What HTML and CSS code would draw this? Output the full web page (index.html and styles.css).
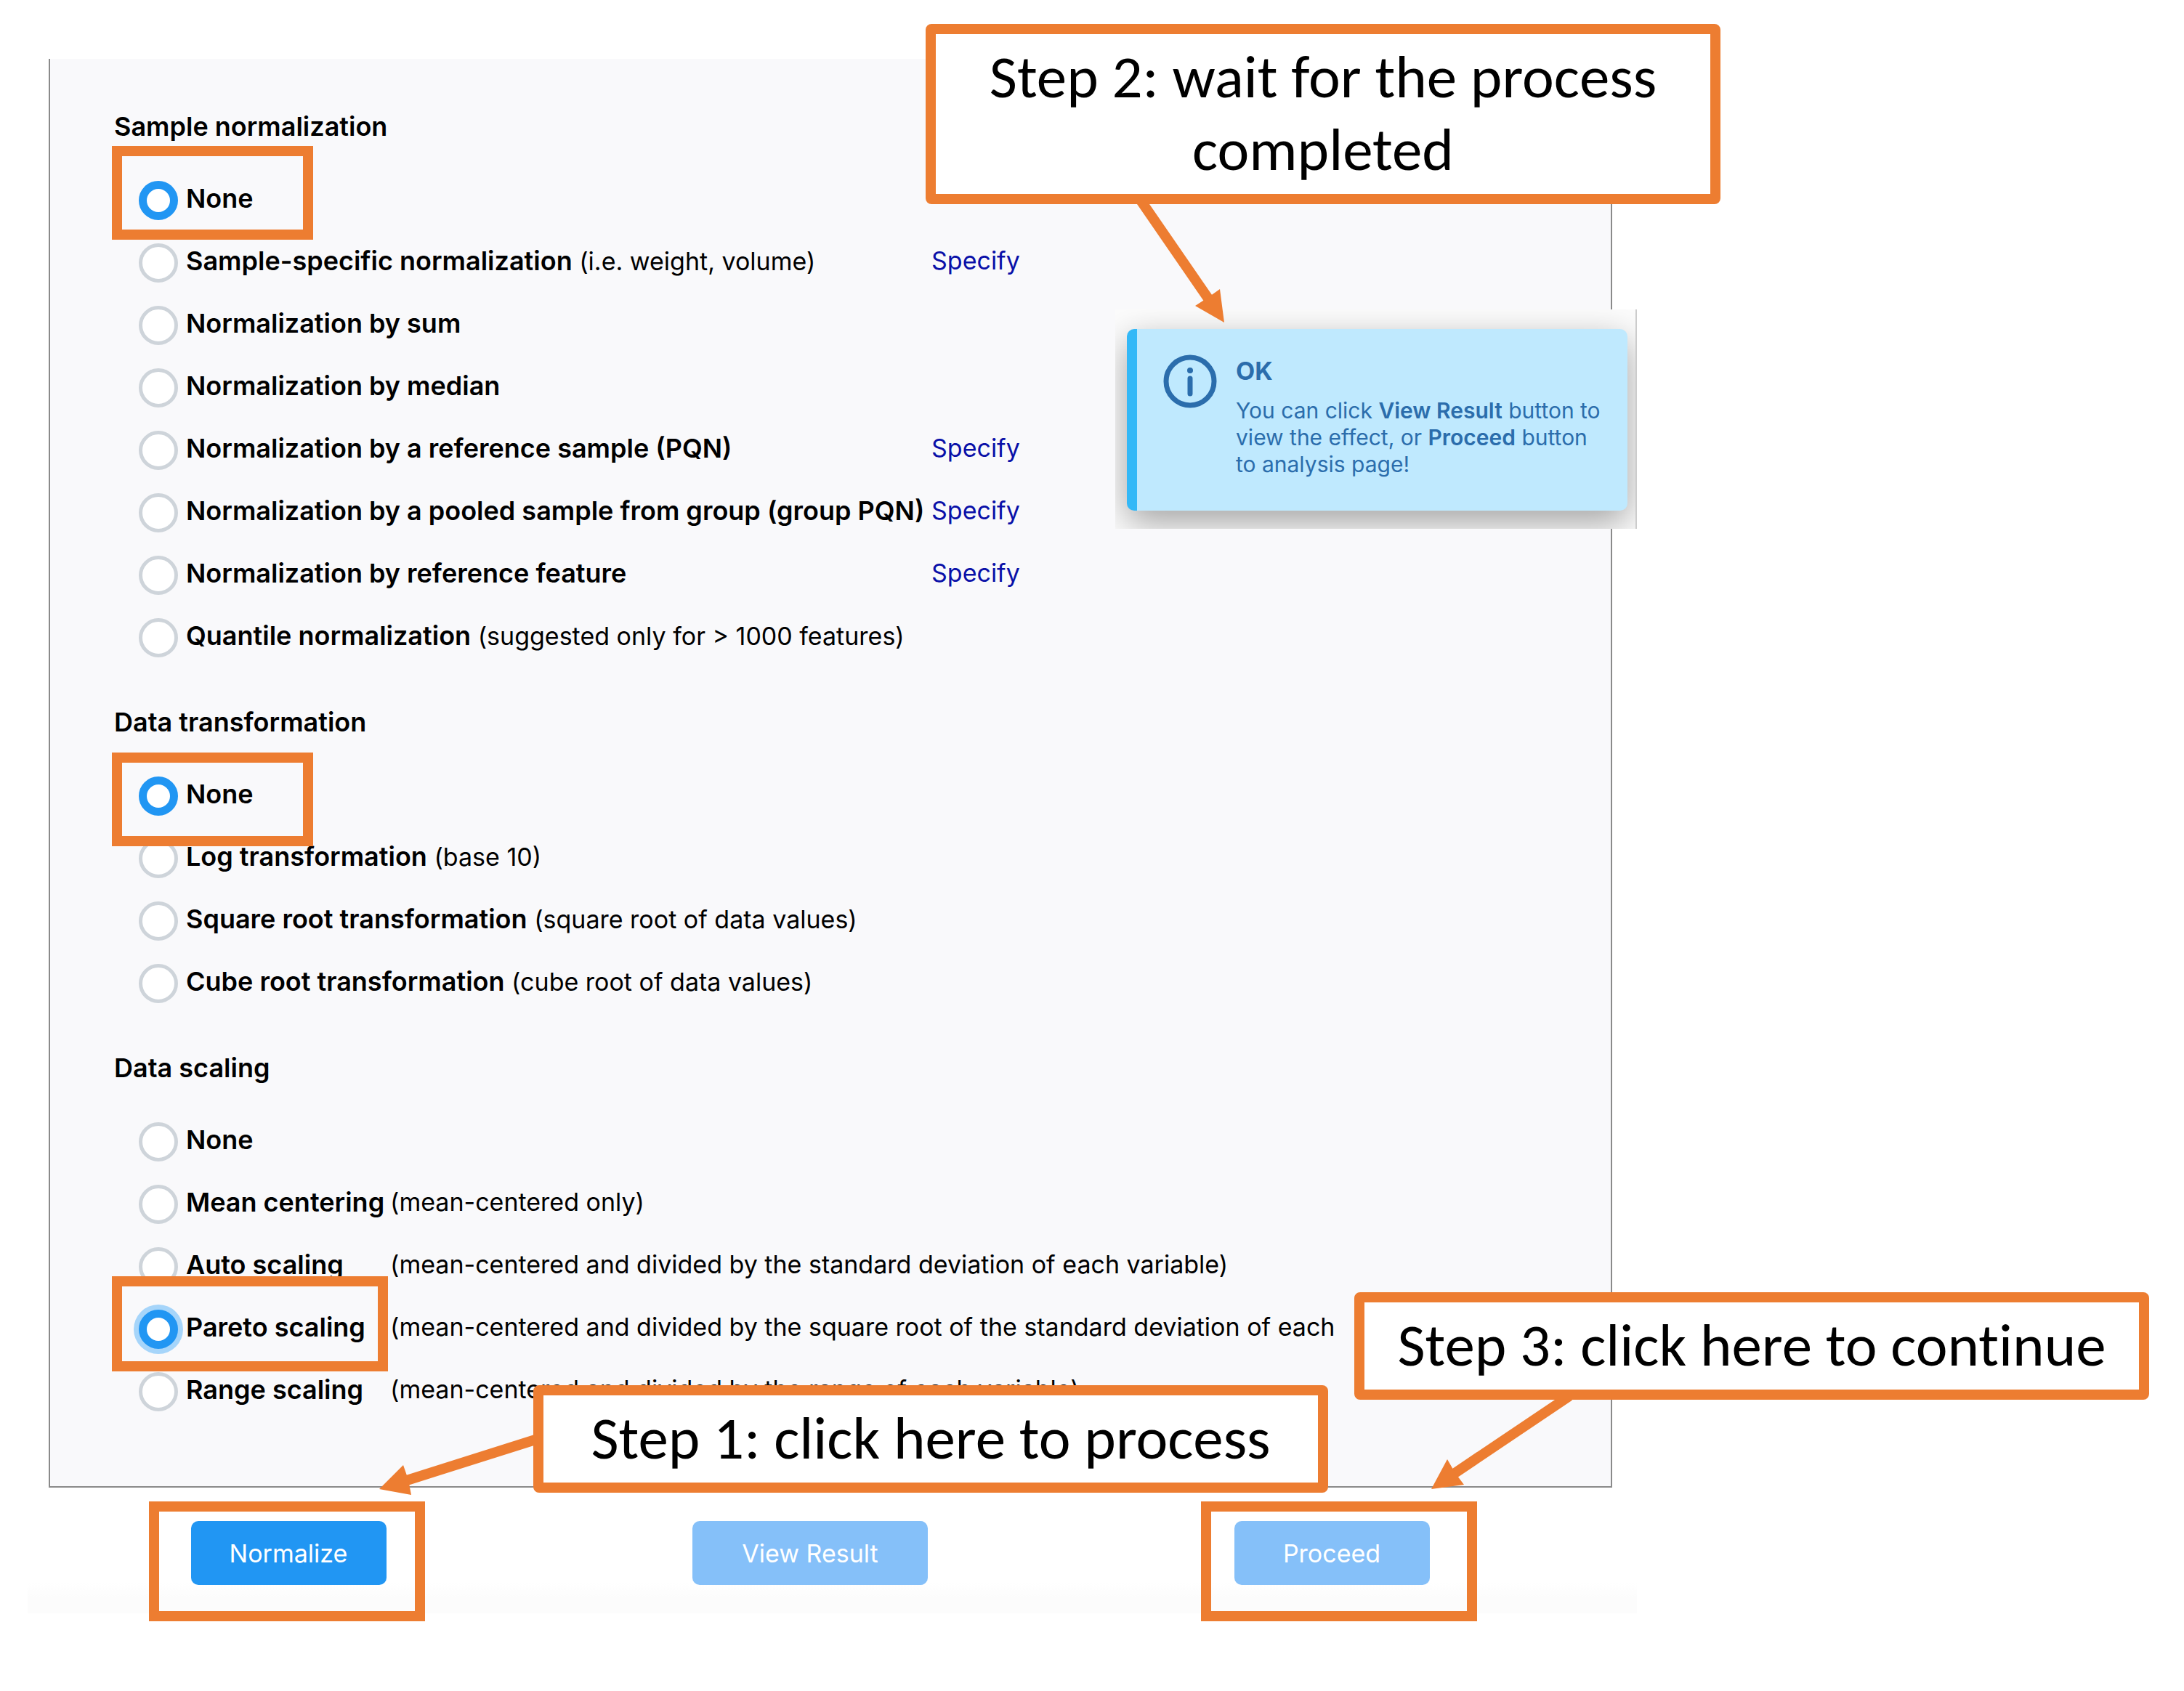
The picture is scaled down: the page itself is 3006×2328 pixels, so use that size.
FILE: index.html
```
<!DOCTYPE html>
<html lang="en">
<head>
<meta charset="utf-8">
<title>Normalization guide</title>
<link rel="stylesheet" href="styles.css">
</head>
<body>
<main class="guide">
  <form class="sheet">
    <div class="panel">
      <fieldset class="group">
        <legend>Sample normalization</legend>
        <div class="option"><input type="radio" name="norm" id="norm-none" checked><label for="norm-none"><b>None</b></label></div>
        <div class="option"><input type="radio" name="norm" id="norm-spec"><label class="wide" for="norm-spec"><b>Sample-specific normalization</b> (i.e. weight, volume)</label><a href="#">Specify</a></div>
        <div class="option"><input type="radio" name="norm" id="norm-sum"><label for="norm-sum"><b>Normalization by sum</b></label></div>
        <div class="option"><input type="radio" name="norm" id="norm-med"><label for="norm-med"><b>Normalization by median</b></label></div>
        <div class="option"><input type="radio" name="norm" id="norm-pqn"><label class="wide" for="norm-pqn"><b>Normalization by a reference sample (PQN)</b></label><a href="#">Specify</a></div>
        <div class="option"><input type="radio" name="norm" id="norm-group"><label class="wide" for="norm-group"><b>Normalization by a pooled sample from group (group PQN)</b></label><a href="#">Specify</a></div>
        <div class="option"><input type="radio" name="norm" id="norm-feat"><label class="wide" for="norm-feat"><b>Normalization by reference feature</b></label><a href="#">Specify</a></div>
        <div class="option"><input type="radio" name="norm" id="norm-quant"><label for="norm-quant"><b>Quantile normalization</b> (suggested only for &gt; 1000 features)</label></div>
      </fieldset>
      <fieldset class="group">
        <legend>Data transformation</legend>
        <div class="option"><input type="radio" name="trans" id="trans-none" checked><label for="trans-none"><b>None</b></label></div>
        <div class="option"><input type="radio" name="trans" id="trans-log"><label for="trans-log"><b>Log transformation</b> (base 10)</label></div>
        <div class="option"><input type="radio" name="trans" id="trans-sqrt"><label for="trans-sqrt"><b>Square root transformation</b> (square root of data values)</label></div>
        <div class="option"><input type="radio" name="trans" id="trans-cube"><label for="trans-cube"><b>Cube root transformation</b> (cube root of data values)</label></div>
      </fieldset>
      <fieldset class="group">
        <legend>Data scaling</legend>
        <div class="option"><input type="radio" name="scale" id="scale-none"><label for="scale-none"><b>None</b></label></div>
        <div class="option"><input type="radio" name="scale" id="scale-mean"><label class="split" for="scale-mean"><b>Mean centering</b><span>(mean-centered only)</span></label></div>
        <div class="option"><input type="radio" name="scale" id="scale-auto"><label class="split" for="scale-auto"><b>Auto scaling</b><span>(mean-centered and divided by the standard deviation of each variable)</span></label></div>
        <div class="option"><input type="radio" class="focused" name="scale" id="scale-pareto" checked><label class="split" for="scale-pareto"><b>Pareto scaling</b><span>(mean-centered and divided by the square root of the standard deviation of each</span></label></div>
        <div class="option"><input type="radio" name="scale" id="scale-range"><label class="split" for="scale-range"><b>Range scaling</b><span>(mean-centered and divided by the range of each variable)</span></label></div>
      </fieldset>
    </div>
    <div class="actions">
      <button type="button">Normalize</button>
      <button type="button" class="roomy" disabled>View Result</button>
      <button type="button" disabled>Proceed</button>
    </div>
  </form>

  <aside class="toast-area">
    <div class="toast" role="status">
      <svg class="info" viewBox="0 0 74 74" aria-hidden="true"><circle cx="37" cy="37" r="33"/><path d="M37 33V54"/><circle class="dot" cx="37" cy="22" r="4"/></svg>
      <div>
        <h2>OK</h2>
        <p>You can click <b>View Result</b> button to view the effect, or <b>Proceed</b> button to analysis page!</p>
      </div>
    </div>
  </aside>

  <div class="mark mark-norm"></div>
  <div class="mark mark-trans"></div>
  <div class="mark mark-pareto"></div>
  <div class="mark mark-normalize"></div>
  <div class="mark mark-proceed"></div>

  <svg class="arrows" viewBox="0 0 3006 2328" aria-hidden="true">
    <path class="shaft" d="M1568 273L1663 411M740 1981L560 2038M2160 1922L2001 2029"/>
    <path class="head" d="M1685 444L1645 421L1662 410L1679 398ZM522 2050L555 2017L562 2037L566 2058ZM1970 2050L1992 2009L2003 2028L2015 2044Z"/>
  </svg>

  <div class="callout step-two">Step 2: wait for the process completed</div>
  <div class="callout step-one">Step 1: click here to process</div>
  <div class="callout step-three">Step 3: click here to continue</div>
</main>
</body>
</html>
```
FILE: styles.css
```
* { box-sizing: border-box; }

body {
  margin: 0;
  background: #fff;
  color: #000;
  font-family: Inter, "Liberation Sans", sans-serif;
  font-size: 34px;
}

.guide {
  position: relative;
  padding: 81px 38px 108px;
}

/* form */
.sheet { max-width: 2215px; background: linear-gradient(#fff, #fff 98%, #fcfcfc 99%); }

.panel {
  display: flex;
  flex-direction: column;
  gap: 43px;
  margin: 0 34px 0 29px;
  padding: 63px 24px 87px 88px;
  background: #f9f9fb;
  border: 2px solid #8a8a8a;
  border-top: 0;
}

.group { margin: 0; padding: 0; border: 0; min-width: 0; }

legend {
  padding: 0;
  margin-bottom: 29px;
  font-size: 36px;
  line-height: 60px;
  font-weight: 600;
}

.option {
  display: flex;
  align-items: center;
  height: 86px;
  padding-left: 34px;
  white-space: nowrap;
}

.option label, .option a { padding-bottom: 6px; line-height: 50px; }
.option label { margin-left: 11px; }
.option b { font-size: 36px; font-weight: 600; }
.wide { width: 1026px; }
.split { display: flex; }
.split b { width: 281px; }

a { color: #0a10a8; text-decoration: none; }

input[type="radio"] {
  appearance: none;
  flex: none;
  width: 54px;
  height: 54px;
  margin: 0;
  border: 5px solid #ced4da;
  border-radius: 50%;
  background: #fff;
}
input[type="radio"]:checked { border: 11px solid #2196f3; }
input[type="radio"].focused { box-shadow: 0 0 0 7px #a6d5fa; }

.actions {
  display: grid;
  grid-template-columns: repeat(3, 1fr);
  justify-items: center;
  margin-right: 61px;
  padding: 46px 0 39px;
}

button {
  min-width: 269px;
  height: 88px;
  padding: 0 50px;
  border: 0;
  border-radius: 10px;
  background: #2196f3;
  color: #fff;
  font: inherit;
}
.roomy { padding: 0 68px; }
button:disabled { background: #85c0f9; }

/* notification, laid over the form */
.toast-area {
  position: absolute;
  left: 1535px;
  top: 426px;
  width: 718px;
  padding: 27px 11px 25px 16px;
  overflow: hidden;
  background: #fcfcfc;
  border-right: 2px solid #ccc;
}

.toast {
  display: flex;
  gap: 26px;
  min-height: 250px;
  padding: 35px 20px 35px 36px;
  border-left: 14px solid #33b8f7;
  border-radius: 10px;
  background: #bfe9fe;
  box-shadow: 0 16px 50px rgba(0, 0, 0, 0.36);
  color: #2b6dac;
}

.toast h2 { margin: 0 0 13px; font-size: 34px; line-height: 46px; }
.toast p { margin: 0; font-size: 30px; line-height: 37px; }
.toast b { font-weight: 600; }

.info {
  flex: none;
  width: 74px;
  height: 74px;
  fill: none;
  stroke: #2b6dac;
  stroke-width: 7;
  stroke-linecap: round;
}
.info .dot { fill: #2b6dac; stroke: none; }

/* annotations, placed freely over the page */
.mark { position: absolute; border: 14px solid #ed7d31; }
.mark-norm { left: 154px; top: 201px; width: 277px; height: 129px; }
.mark-trans { left: 154px; top: 1036px; width: 277px; height: 129px; }
.mark-pareto { left: 154px; top: 1757px; width: 380px; height: 131px; }
.mark-normalize { left: 205px; top: 2067px; width: 380px; height: 165px; }
.mark-proceed { left: 1653px; top: 2067px; width: 380px; height: 165px; }

.arrows { position: absolute; left: 0; top: 0; width: 3006px; height: 2328px; pointer-events: none; }
.shaft { fill: none; stroke: #ed7d31; stroke-width: 14; }
.head { fill: #ed7d31; }

.callout {
  position: absolute;
  width: 1094px;
  padding: 9px 20px 11px;
  border: 14px solid #ed7d31;
  border-radius: 8px;
  background: #fff;
  font-family: Carlito, Lato, sans-serif;
  font-size: 83px;
  font-variant-ligatures: none;
  line-height: 100px;
  text-align: center;
}
.step-two { left: 1274px; top: 33px; }
.step-one { left: 734px; top: 1907px; }
.step-three { left: 1864px; top: 1779px; }
```
